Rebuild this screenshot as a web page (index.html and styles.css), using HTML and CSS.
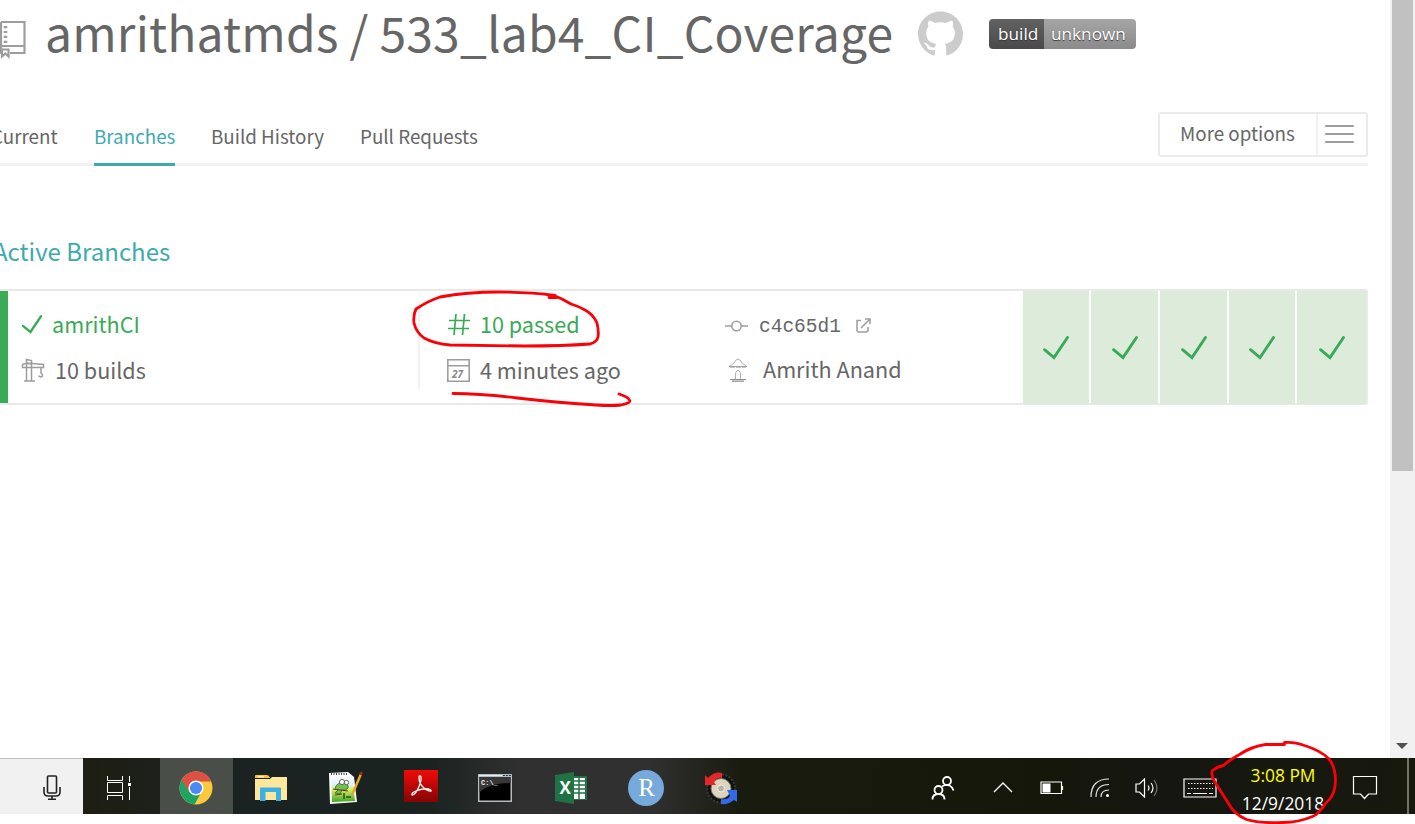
FILE: index.html
```html
<!DOCTYPE html>
<html lang="en">
<head>
<meta charset="utf-8">
<title>amrithatmds / 533_lab4_CI_Coverage</title>
<link rel="stylesheet" href="styles.css">
</head>
<body>
<svg class="defs" aria-hidden="true">
  <defs>
    <symbol id="check" viewBox="0 0 28 26"><path d="M2.500 14.700 12 22.500 25.500 2.500" fill="none" stroke="#39aa56" stroke-width="2.900" stroke-linecap="round"/></symbol>
  </defs>
</svg>
<div class="viewport">
  <main class="page">
    <header class="repo">
      <svg class="repo-icon" viewBox="0 0 40 40" fill="none" stroke="#9d9d9d" stroke-width="2.200">
        <path d="M15 2h23.500v31H24M15 2v31h1M15 26h23.500"/><path d="M19.500 6v17" stroke-width="3.500" stroke-dasharray="2.200 2.700"/><path d="M16 29.500h6.500v7l-3.200-3-3.300 3z"/>
      </svg>
      <h1 class="repo-name">amrithatmds / 533_lab4_CI_Coverage</h1>
      <svg class="github" viewBox="0 0 16 16"><path fill="#ccc" d="M8 0C3.580 0 0 3.580 0 8c0 3.540 2.290 6.530 5.470 7.590.4.070.55-.17.55-.38 0-.19-.01-.82-.01-1.490-2.010.37-2.530-.49-2.690-.94-.09-.23-.48-.94-.82-1.130-.28-.15-.68-.52-.01-.53.63-.01 1.080.58 1.230.82.72 1.210 1.870.87 2.330.66.070-.52.28-.87.51-1.070-1.780-.2-3.640-.89-3.640-3.950 0-.87.31-1.590.82-2.150-.08-.2-.36-1.020.08-2.120 0 0 .67-.21 2.200.82.64-.18 1.320-.27 2-.27s1.360.09 2 .27c1.530-1.040 2.200-.82 2.200-.82.44 1.100.16 1.920.08 2.120.51.56.82 1.270.82 2.150 0 3.070-1.870 3.750-3.650 3.950.29.25.54.73.54 1.480 0 1.070-.01 1.930-.01 2.200 0 .21.15.46.55.38A8.010 8.010 0 0 0 16 8c0-4.420-3.580-8-8-8z"/></svg>
      <div class="badge"><span class="badge-key">build</span><span class="badge-value">unknown</span></div>
    </header>
    <nav class="tabs">
      <a class="tab tab-current">Current</a>
      <a class="tab tab-active">Branches</a>
      <a class="tab tab-history">Build History</a>
      <a class="tab tab-pulls">Pull Requests</a>
      <div class="options"><span class="options-label">More options</span><span class="options-menu"><i></i><i></i><i></i></span></div>
    </nav>
    <h2 class="section-title">Active Branches</h2>
    <section class="branch">
      <div class="col col-name">
        <div class="line green"><svg class="icon-check" width="22" height="21"><use href="#check"/></svg><span class="t-name">amrithCI</span></div>
        <div class="line"><svg class="icon-crane" width="24" height="24" viewBox="0 0 24 24" fill="none" stroke="#9d9d9d" stroke-width="1.500"><path d="M5.500 23V1.500l5 1V23M1.500 9.500V6.500L6 5l16.500 1.500V9.500zM3 23h11M20 10v5q3 3 0 4l-2.500-1M5 5.500 11 6"/></svg><span class="t-builds">10 builds</span></div>
      </div>
      <div class="col col-build">
        <div class="line green"><svg class="icon-hash" width="22" height="21" viewBox="0 0 22 21" fill="none" stroke="#39aa56" stroke-width="1.700"><path d="M8 0 6 21M16.500 0l-2 21M1 6.500h21M0 14.500h21"/></svg><span class="t-passed">10 passed</span></div>
        <div class="line"><svg class="icon-cal" width="23" height="23" viewBox="0 0 23 23" fill="none" stroke="#9d9d9d" stroke-width="1.600"><path d="M.8.8h21.400v21.400H.8zM1 6.800h21"/><text x="5" y="18.500" class="cal-day">27</text></svg><span class="t-ago">4 minutes ago</span></div>
      </div>
      <div class="col col-commit">
        <div class="line line-commit"><svg width="23" height="12" viewBox="0 0 23 12" fill="none" stroke="#9d9d9d" stroke-width="1.600"><circle cx="11.500" cy="6" r="4.700"/><path d="M0 6h6.800M16.200 6H23"/></svg><code class="t-hash">c4c65d1</code><svg class="icon-link" width="15" height="15" viewBox="0 0 15 15" fill="none" stroke="#9d9d9d" stroke-width="1.500"><path d="M5 2.500H1v9.500q0 2 2 2h7q2 0 2-2V9M9 1h5v5M14 1 5 10"/></svg></div>
        <div class="line line-author"><svg class="avatar" width="22" height="26" viewBox="0 0 22 26" fill="none" stroke="#8d8d8d" stroke-width=".7"><path d="M2 9.500 7 6l2-3q2-2 4 0l2 3 5 3.500z"/><path d="M3 10h16" stroke-width="1.200" stroke-dasharray="5 1"/><path d="M8.500 22v-5q0-2 1.500-3 1-2 2 0 1.500 1 1.500 3v5"/><path d="M3 22.500h16M5 24.200h12" stroke-width="1.200"/></svg><span class="t-author">Amrith Anand</span></div>
      </div>
      <div class="history">
        <span class="cell"><svg width="28" height="26"><use href="#check"/></svg></span>
        <span class="cell"><svg width="28" height="26"><use href="#check"/></svg></span>
        <span class="cell"><svg width="28" height="26"><use href="#check"/></svg></span>
        <span class="cell"><svg width="28" height="26"><use href="#check"/></svg></span>
        <span class="cell"><svg width="28" height="26"><use href="#check"/></svg></span>
      </div>
    </section>
  </main>
  <aside class="scrollbar"><div class="thumb"></div><div class="arrow"></div></aside>
</div>
<footer class="taskbar">
  <div class="search"><svg width="18" height="26" viewBox="0 0 18 26" fill="none" stroke="#222" stroke-width="1.600"><rect x="4.500" y="1" width="9" height="17" rx="1"/><path d="M1 12v5q0 4 4 4h8q4 0 4-4v-5M9 21v3M5 24.200h8"/></svg></div>
  <div class="slot taskview"><svg width="26" height="24" viewBox="0 0 26 24" fill="none" stroke="#fff"><path d="M1.500 0v4.500h15V0M1.500 6.500h15v10h-15zM1.500 24v-4.500h15V24M23.500 0v6M23.500 11v13"/><path d="M22 7h3v3h-3z" fill="#fff" stroke="none"/></svg></div>
  <div class="slot chrome"><svg width="34" height="34" viewBox="0 0 34 34"><circle cx="17" cy="17" r="16.500" fill="#fbc93c"/><path d="M17 17 2.700 8.800A16.500 16.500 0 0 0 15.500 33.400L23 20z" fill="#1da463"/><path d="M2.700 8.800A16.500 16.500 0 0 1 32.200 10.500H17L10 21z" fill="#dd5144"/><circle cx="17" cy="17" r="7.600" fill="#fff"/><circle cx="17" cy="17" r="6.100" fill="#4a8af4"/></svg></div>
  <div class="slot"><svg width="32" height="28" viewBox="0 0 32 28"><path d="M0 2q0-1 1-1h11q2 0 3 3H0z" fill="#fbc72d"/><path d="M0 5h15l2-2h15v23H0z" fill="#fee69a"/><path d="M3 2.800h6" stroke="#fff"/><path d="M5 27V14.500q0-1 1-1h19q1 0 1 1V27h-5V18H10.500v9z" fill="#3bb0e5"/></svg></div>
  <div class="slot"><svg width="34" height="34" viewBox="0 0 34 34"><defs><linearGradient id="leaf" x2="0" y2="1"><stop stop-color="#fafdff"/><stop offset=".35" stop-color="#deeffa"/><stop offset=".5" stop-color="#dcef70"/><stop offset="1" stop-color="#42a51e"/></linearGradient></defs><path d="m0 2 19-1 6 5 3 25-27 2z" fill="#fff"/><path d="m2 5 16 0 6 4 2 21-23 1z" fill="url(#leaf)"/><path d="M2 3h17" stroke="#444" stroke-width="2" stroke-dasharray="1 1.500"/><path d="M6 18q1-7 9-6 5 1 4 5-2 3-6 2l-2 4-5-1 3-3z" fill="#72c24b" stroke="#2d6c2a" stroke-width=".8"/><path d="m4 18 15 2M6 24l7-1" stroke="#792e27"/><circle cx="13" cy="11" r="2.600" fill="#fff" stroke="#444" stroke-width=".8"/><circle cx="17.500" cy="11.500" r="2.200" fill="#fff" stroke="#444" stroke-width=".8"/><path d="M15 22v6m2-2h5" stroke="#245514" stroke-width="1.500"/><path d="M23 24 32 3" stroke="#e6a823" stroke-width="2.500"/><path d="m31.500 4 1.300-3" stroke="#ad2222" stroke-width="2.500"/></svg></div>
  <div class="slot"><svg class="adobe" width="34" height="32" viewBox="0 0 34 32"><defs><linearGradient id="red" x2="0" y2="1"><stop stop-color="#f20a09"/><stop offset="1" stop-color="#850404"/></linearGradient></defs><path d="M0 0h34v32H0z" fill="url(#red)"/><path d="M8 25q-1-2 4-4 8-3 12-2 4 1 3 2-2 1-7-3-5-4-5-10 0-3 1.500-2 1.500 2-.5 8-4 11-8 11z" fill="none" stroke="#fff" stroke-width="1.300"/></svg></div>
  <div class="slot"><svg class="cmd" width="34" height="28" viewBox="0 0 34 28"><path d="M0 0h34v28H0z" fill="#b7bcc1"/><path d="M1.500 3h31v23.500h-31z" fill="#000"/><path d="M1.500 3h31v6Q12 9 1.500 18z" fill="#373737"/><path d="M1 1.500h23" stroke="#e7eaf0"/><path d="M25 1.500h8" stroke="#335" stroke-dasharray="2 1"/><text x="3" y="11" class="prompt">C:\_</text></svg></div>
  <div class="slot"><svg width="32" height="32" viewBox="0 0 32 32"><path d="M19 4h13v24H19z" fill="#207245"/><path d="M19 6h11v21H19z" fill="#fff"/><path d="M19 9h11M19 13h11M19 17h11M19 21h11M24 6v21" stroke="#207245" stroke-width="1.500"/><path d="m0 3 19-3v32L0 29z" fill="#207245"/><text x="4.500" y="21.500" class="excel">X</text></svg></div>
  <div class="slot"><svg width="36" height="36" viewBox="0 0 36 36"><circle cx="18" cy="18" r="18" fill="#75aadb"/><text x="18.500" y="25.500" text-anchor="middle" class="rlogo">R</text></svg></div>
  <div class="slot"><svg width="34" height="34" viewBox="0 0 34 34"><circle cx="17" cy="17.500" r="14" fill="#111" stroke="#3a3a3a" stroke-width="2" stroke-dasharray="2 1.500"/><circle cx="17" cy="17.500" r="10" fill="#dcd5be" stroke="#77746a"/><circle cx="17" cy="17.500" r="3.500" fill="#b5b3a8" stroke="#f2f0e8"/><path d="M1 14V4l3 3Q11 0 18 2v5q-5-1-8 4l2 3z" fill="#e62727"/><path d="M33 19v12l-3-2q-6 5-13 4v-5q6 1 9-3l-3-6z" fill="#2e6be5"/></svg></div>
  <div class="tray">
    <div class="t people"><svg width="24" height="24" viewBox="0 0 24 24" fill="none" stroke="#fff" stroke-width="1.800"><circle cx="16" cy="5" r="4"/><circle cx="7.500" cy="14" r="4"/><path d="M1.500 23.500q0-5.500 6-5.500t6 5.500M11 10.500q4-2.500 7.500-1 3 1.500 4 5"/></svg></div>
    <div class="t chevron"><svg width="20" height="12" viewBox="0 0 20 12" fill="none" stroke="#fff" stroke-width="1.400"><path d="m1 10 9-9 9 9"/></svg></div>
    <div class="t battery"><svg width="24" height="14" viewBox="0 0 24 14"><path d="M1 1h20.500v11.500H1zM22.500 5v4" fill="none" stroke="#fff" stroke-width="1.200"/><path d="M2.500 2.500h8v9h-8z" fill="#fff"/></svg></div>
    <div class="t wifi"><svg width="20" height="20" viewBox="0 0 20 20" fill="none" stroke="#e5e5e5" stroke-width="1.200"><path d="M1 19Q1 1 19 1M6 19Q6 6.500 19 6.500M11 19q0-7 8-7"/><circle cx="17.500" cy="17.500" r="1.500" fill="#fff" stroke="none"/></svg></div>
    <div class="t speaker"><svg width="24" height="20" viewBox="0 0 24 20" fill="none" stroke="#fff" stroke-width="1.200"><path d="M1 6h3.500L9.500 1v18l-5-5H1zM13 7.500q2 2.500 0 5M16 5q4 5 0 10"/><path d="M19 2q6 8 0 16" stroke="#777"/></svg></div>
    <div class="t keyboard"><svg width="34" height="20" viewBox="0 0 34 20" fill="none" stroke="#fff"><path d="M1 1h32v18H1z" stroke-width="1.200"/><path d="M5 5.500h25M5 10.500h25" stroke-dasharray="1.500 1.500"/><path d="M4 15.500h4m2 0h14m2 0h4"/></svg></div>
    <div class="clock"><span class="time">3:08 PM</span><span class="date">12/9/2018</span></div>
    <div class="t action"><svg width="26" height="26" viewBox="0 0 26 26" fill="none" stroke="#fff" stroke-width="1.200"><path d="M1.500 1.500h23V19h-8l-4 4.500-4-4.500h-7z"/></svg></div>
    <div class="desktop-edge"></div>
  </div>
</footer>
<svg class="ink" viewBox="0 0 1415 824" fill="none" stroke="#fb0007" stroke-width="2.800" stroke-linecap="round" stroke-linejoin="round">
  <path d="M549 297.500l8 0-2-2Q530 292 499 292q-32 0-59 5-12 4-24 12-3 6-2 14 2 9 10 15 11 6 26 7l75 1q38 0 65-2 7-2 8-7 1-5-1-14-4-9-12-13-7-4-14-6-8-5-18-9"/>
  <path d="M453 393.500q28 0 64 4.500 44 5 79 7 16 1 25 0 9-2 9-4-1-4-11-7"/>
  <path d="M1284.500 744.500v-2q9-1 20 3 16 5 24 13 7 8 7 22 0 15-10 23-7 11-13 13-14 6-30 6-22 1-36-3-12-5-18-16-7-11-14-22-4-7-2-11 5-4 11-5 5-5 16-11 12-8 26-10z"/>
</svg>
</body>
</html>
```
FILE: styles.css
```css
* { box-sizing: border-box; }
body { margin: 0; width: 1415px; height: 824px; overflow: hidden; background: #fff; color: #666; font-family: "Noto Sans CJK SC", "Open Sans", sans-serif; position: relative; }
.defs { display: block; width: 0; height: 0; }
svg { flex: none; display: block; }
h1, h2 { margin: 0; font-weight: 400; }
.viewport { display: flex; height: 758px; }
.page { width: 1390px; overflow: hidden; }
.repo { display: flex; height: 68px; align-items: flex-start; }
.repo-icon { width: 40px; height: 40px; margin: 20px 0 0 -14px; }
.repo-name { width: 871px; padding-left: 19px; font-size: 48px; line-height: 62px; letter-spacing: .18px; white-space: nowrap; }
.github { width: 45px; height: 46px; margin: 11px 26px 0 21px; }
.badge { display: flex; width: 147px; height: 30px; margin-top: 19px; border-radius: 4px; overflow: hidden; color: #fff; font: 500 17.2px/29px "Open Sans", sans-serif; text-shadow: 0 1px 1px #333; }
.badge-key { width: 55px; padding-left: 9px; background: linear-gradient(#626262, #494949); }
.badge-value { width: 92px; padding-left: 7px; background: linear-gradient(#a5a5a5, #8b8b8b); }
.tabs { display: flex; width: 1368px; height: 57px; margin-top: 41px; border-bottom: 3px solid #f1f1f1; font-size: 18.8px; line-height: 54px; white-space: nowrap; }
.tab { height: 57px; margin-right: 36px; }
.tab-current { width: 67px; margin-left: -9px; }
.tab-active { width: 81px; color: #3eaaaf; border-bottom: 3px solid #3eaaaf; }
.tab-history { width: 113px; }
.options { display: flex; width: 210px; height: 45px; margin: 3px 0 0 auto; border: 2px solid #ebebeb; border-radius: 3px; line-height: 38px; }
.options-label { width: 156px; padding-left: 20px; }
.options-menu { display: flex; flex: 1; flex-direction: column; gap: 6px; padding: 11px 0 0 7px; border-left: 2px solid #f1f1f1; }
.options-menu i { width: 29px; height: 2px; border-radius: 1px; background: #9d9d9d; }
.section-title { margin: 64px 0 0 -7px; height: 59px; font-size: 24px; line-height: 42px; color: #3eaaaf; }
.branch { display: flex; width: 1368px; height: 116px; border: 2px solid #e9e9e9; border-left: 0; border-radius: 0 3px 3px 0; }
.col { padding-top: 10px; }
.col-name { width: 418px; border-left: 8px solid #39aa56; padding-left: 13px; }
.col-build { width: 307px; height: 88px; margin-top: 10px; padding: 0 0 0 27px; border-left: 2px solid #f1f1f1; }
.col-commit { width: 298px; }
.line { display: flex; align-items: center; height: 46px; font-size: 21.6px; line-height: 46px; white-space: nowrap; }
.green { color: #39aa56; }
.t-name { margin-left: 9px; }
.t-builds { margin-left: 10px; }
.t-passed { margin-left: 10px; }
.t-ago { margin-left: 10px; }
.icon-hash { margin-left: 1px; }
.cal-day { fill: #888; stroke: none; font: italic bold 10px "Noto Sans", sans-serif; }
.line-commit > svg { margin-top: 3px; }
.t-hash { margin: 6px 0 0 11px; width: 97px; font: 19.5px/46px "Liberation Mono", monospace; }
.line-author { padding-left: 2px; }
.t-author { margin: -2px 0 0 14px; }
.history { display: grid; grid-template-columns: 66px 67px 67px 66px 69px; gap: 2px; height: 113px; }
.cell { display: flex; align-items: center; justify-content: center; background: #ddebda; }
.scrollbar { display: flex; flex-direction: column; width: 25px; background: #f1f1f1; padding: 0 2px; }
.thumb { width: 21px; height: 471px; background: #c1c1c1; }
.arrow { margin: auto 0 9px 4px; width: 0; border: 6px solid transparent; border-top-color: #505050; border-bottom: 0; }
.taskbar { display: flex; height: 56px; background: linear-gradient(90deg, #1e1e12 83px, #1b2322 230px, #1b2321 430px, #303030 520px, #303030 650px, #1a1b0f 740px, #16170b 1060px, #151611 1160px, #18190d); }
.search { width: 83px; padding: 16px 0 0 43px; border-top: 1px solid #bbb; background: #f1f1f1; }
.slot { display: flex; width: 75px; align-items: center; justify-content: center; padding-top: 3px; }
.taskview { width: 77px; padding: 3px 5px 0 0; }
.chrome { width: 73px; padding-right: 2px; background: #4a4e49; }
.adobe { margin-top: -4px; }
.cmd { margin-left: -2px; }
.prompt { fill: #eee; font: bold 7px "Liberation Mono", monospace; }
.excel { fill: #fff; font: bold 17px "Open Sans", sans-serif; }
.rlogo { fill: #fff; font: 25px "Liberation Serif", serif; }
.tray { display: flex; margin-left: auto; color: #fff; }
.t { display: flex; align-items: center; justify-content: center; padding-top: 4px; }
.people, .chevron { width: 60px; }
.battery { width: 36px; padding-left: 2px; }
.wifi { width: 62px; }
.speaker { width: 32px; }
.keyboard { width: 74px; }
.clock { display: flex; flex-direction: column; align-items: center; width: 92px; padding-top: 3px; font: 17.4px/28px "Open Sans", sans-serif; white-space: nowrap; }
.time { color: #ff0; }
.action { width: 72px; }
.desktop-edge { width: 8px; margin-left: 6px; border-left: 2px solid #70716b; }
.ink { position: absolute; left: 0; top: 0; width: 1415px; height: 824px; pointer-events: none; }
```
